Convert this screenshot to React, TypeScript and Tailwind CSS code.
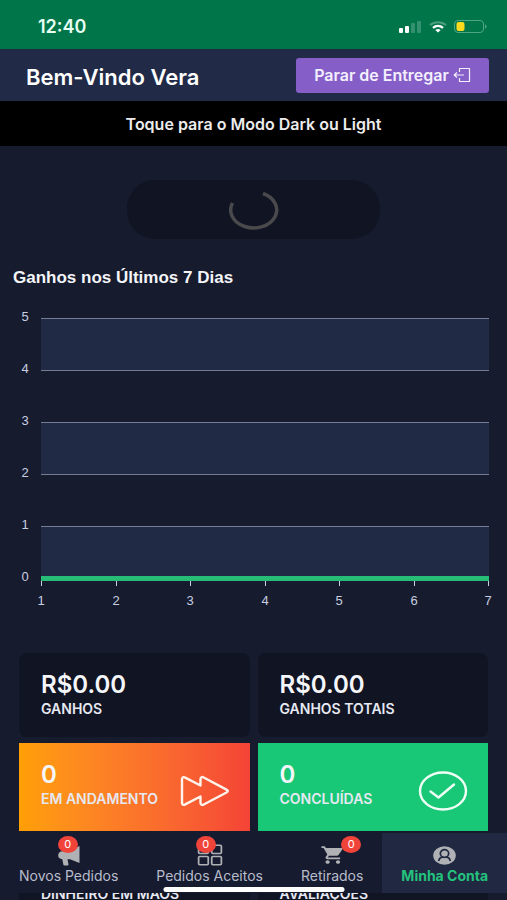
import type { ReactNode } from "react";
import { IoGridOutline } from "react-icons/io5";
import { IoMdCart } from "react-icons/io";

function StatusBar() {
  return (
    <div className="flex h-[49px] items-center justify-between bg-[#007549] pr-5 pl-[38px] pt-1">
      <span className="text-[18px] font-semibold text-[#e6fff3]">12:40</span>
      <div className="flex items-center gap-[7px]">
        <svg className="h-3 w-[23px]" viewBox="0 0 23 12" aria-hidden="true">
          <rect x="0" y="7" width="4" height="5" rx="1" fill="#fff" />
          <rect x="6" y="5" width="4" height="7" rx="1" fill="#fff" />
          <rect x="12" y="2" width="4" height="10" rx="1" fill="#339170" />
          <rect x="18" y="0" width="4" height="12" rx="1" fill="#339170" />
        </svg>
        <svg className="h-3 w-[18px]" viewBox="0 0 18 12" fill="none" aria-hidden="true">
          <path d="M1 4C5.400 0.200 12.600 0.200 17 4" stroke="#4c9f7d" strokeWidth="2" />
          <path d="M4 6.800C7 4.300 11 4.300 14 6.800" stroke="#fff" strokeWidth="2.400" />
          <path d="M6.300 9C8 7.700 10 7.700 11.700 9L9 11.600Z" fill="#fff" />
        </svg>
        <svg className="h-[13px] w-[33px]" viewBox="0 0 33 13" fill="none" aria-hidden="true">
          <rect x="0.500" y="0.500" width="29" height="12" rx="3.500" stroke="#4fa683" />
          <rect x="2.500" y="2" width="8" height="9" rx="2" fill="#fbdb1d" />
          <path d="M31 4.500C33 5 33 8 31 8.500Z" fill="#4fa683" />
        </svg>
      </div>
    </div>
  );
}

function ExitIcon() {
  return (
    <svg className="h-4 w-[18px]" viewBox="0 0 18 16" fill="none" stroke="currentColor" strokeWidth="1.200" strokeLinejoin="round" aria-hidden="true">
      <path d="M6.500 5V1.500H16.500V14.500H6.500V11" />
      <path d="M11 8H1.500M4 5.500L1.200 8L4 10.500" />
    </svg>
  );
}

function ForwardIcon() {
  return (
    <svg className="h-8 w-[50px]" viewBox="0 0 50 32" fill="none" stroke="currentColor" strokeWidth="2.400" strokeLinejoin="round" aria-hidden="true">
      <path d="M2 4.200C2 2.300 3.500 1.500 5.200 2.600L20.500 10.500V4.200C20.500 2.300 22 1.500 23.700 2.500L46.500 14.600C48.300 15.600 48.300 16.600 46.500 17.500L23.700 29.500C22 30.500 20.500 29.700 20.500 27.800V21.500L5.200 29.400C3.500 30.500 2 29.700 2 27.800Z" />
    </svg>
  );
}

function CheckIcon() {
  return (
    <svg className="h-10 w-[50px]" viewBox="0 0 50 40" fill="none" stroke="currentColor" strokeLinecap="round" strokeLinejoin="round" aria-hidden="true">
      <ellipse cx="25" cy="20" rx="23" ry="18.500" strokeWidth="2.400" />
      <path d="M12.500 20.500L20.500 26.500L36 13.500" strokeWidth="2.400" />
    </svg>
  );
}

function MegaphoneIcon() {
  return (
    <svg className="h-[21px] w-[22px]" viewBox="0 0 22 21" fill="currentColor" aria-hidden="true">
      <path d="M21.500 1V18L12 14.300H9.500L10.500 19.500Q10.500 20.500 9.500 20.500H6.500Q5.500 20.500 5.300 19.500L4.300 14.200C1.500 14 0.200 12.500 0.200 10.500C0.200 8 1.700 6.300 4.500 6.300H11Z" />
    </svg>
  );
}

function PersonIcon() {
  return (
    <svg className="h-[19px] w-[23px]" viewBox="0 0 23 19" aria-hidden="true">
      <ellipse cx="11.500" cy="9.500" rx="11.300" ry="9.300" fill="currentColor" />
      <path d="M5.800 15C6 11.500 8.500 10.800 11.500 10.800C14.500 10.800 17 11.500 17.200 15" fill="none" stroke="#202842" strokeWidth="1.700" />
      <ellipse cx="11.500" cy="7.500" rx="4.200" ry="3.800" fill="currentColor" stroke="#202842" strokeWidth="1.700" />
    </svg>
  );
}

const LEVELS = [5, 4, 3, 2, 1, 0];
const DAYS = [1, 2, 3, 4, 5, 6, 7];

function EarningsChart() {
  return (
    <svg className="block w-full" viewBox="0 0 507 310" role="img" aria-label="Ganhos nos Últimos 7 Dias">
      {LEVELS.filter((n) => n % 2 === 1).map((n) => (
        <rect key={n} x="41" y={18 + (5 - n) * 52} width="448" height="52" fill="#212a45" />
      ))}
      {LEVELS.map((n) => (
        <g key={n}>
          {n > 0 && <rect x="41" y={17 + (5 - n) * 52} width="448" height="1" fill="#747d95" />}
          <text x="25" y={20 + (5 - n) * 52} textAnchor="middle" className="fill-[#c9cfe0] font-['Liberation_Sans',Arial,sans-serif] text-[13px]">
            {n}
          </text>
        </g>
      ))}
      {DAYS.map((d, i) => (
        <g key={d}>
          <rect x={41 + Math.round(i * 74.5)} y="280" width="1" height="5" fill="#c9cfe0" />
          <text x={41 + Math.round(i * 74.5)} y="304" textAnchor="middle" className="fill-[#c9cfe0] font-['Liberation_Sans',Arial,sans-serif] text-[13px]">
            {d}
          </text>
        </g>
      ))}
      <rect x="41" y="275" width="448" height="5" fill="#28bd76" />
    </svg>
  );
}

function StatCard({ value, label, tone, icon }: { value?: string; label: string; tone: string; icon?: ReactNode }) {
  return (
    <div className={`flex justify-between pl-[22px] ${tone}`}>
      <div>
        {value && <p className="text-[24px] leading-6 font-semibold text-[#f5f6fa]">{value}</p>}
        <p className="text-[14px] leading-6 font-semibold whitespace-nowrap text-[#e6e8f2]">{label}</p>
      </div>
      {icon}
    </div>
  );
}

interface NavItemProps {
  label: string;
  icon: ReactNode;
  badge?: string;
  active?: boolean;
}

function NavItem({ label, icon, badge, active }: NavItemProps) {
  return (
    <a
      href="#"
      aria-current={active ? "page" : undefined}
      className={`flex flex-auto flex-col items-center pt-[11px] text-[14px] leading-5 whitespace-nowrap ${
        active ? "bg-[#202842] font-bold text-[#24c27c]" : "text-[#b9bdcb]"
      }`}
    >
      <span className="relative flex h-[22px] items-center text-[#b0b1b5]">
        {icon}
        {badge && (
          <span className={`absolute -top-2 flex h-[17px] w-5 items-center justify-center rounded-[50%] bg-[#f0443a] text-[11px] leading-none text-white ${badge}`}>
            0
          </span>
        )}
      </span>
      {label}
    </a>
  );
}

export default function App() {
  return (
    <div className="relative h-screen overflow-hidden bg-[#161b2e] font-[Inter,sans-serif]">
      <StatusBar />
      <header className="flex h-[52px] items-center justify-between bg-[#212a47] pr-[18px] pl-[26px]">
        <h1 className="pt-1 text-[22px] font-semibold text-white">Bem-Vindo Vera</h1>
        <button type="button" className="flex h-[35px] w-[193px] items-center justify-center gap-1 rounded-[3px] bg-[#855fc7] text-[16px] font-semibold whitespace-nowrap text-[#f4efff]">
          Parar de Entregar
          <ExitIcon />
        </button>
      </header>
      <button type="button" className="block h-[45px] w-full bg-black text-center text-[16px] font-semibold text-[#ececec]">
        Toque para o Modo Dark ou Light
      </button>

      <main>
        <div className="mx-auto mt-[34px] flex h-[59px] w-1/2 items-center justify-center rounded-[28px] bg-[#111423]">
          <svg className="h-10 w-[50px]" viewBox="0 0 50 40" fill="none" role="status" aria-label="Carregando">
            <path d="M34 3.500A23 18 0 1 1 3.500 13" stroke="#4a4a4c" strokeWidth="3.500" />
          </svg>
        </div>
        <h2 className="mt-[27px] mb-[11px] pl-[13px] font-['Liberation_Sans',Arial,sans-serif] text-[17px] leading-6 font-bold text-[#f4f5f8]">
          Ganhos nos Últimos 7 Dias
        </h2>
        <EarningsChart />

        <section className="mt-[42px] grid grid-cols-2 gap-x-2 gap-y-1.5 px-[19px]">
          <StatCard value="R$0.00" label="GANHOS" tone="h-[84px] rounded-lg bg-[#111423] pt-5" />
          <StatCard value="R$0.00" label="GANHOS TOTAIS" tone="h-[84px] rounded-lg bg-[#111423] pt-5" />
          <StatCard
            value="0"
            label="EM ANDAMENTO"
            tone="h-[88px] bg-linear-to-r from-[#ff9f04] to-[#f44336] pt-5 pr-5"
            icon={<span className="pt-3 text-[#fff4ec]"><ForwardIcon /></span>}
          />
          <StatCard
            value="0"
            label="CONCLUÍDAS"
            tone="h-[88px] bg-[#19c876] pt-5 pr-5"
            icon={<span className="pt-2 text-[#effff6]"><CheckIcon /></span>}
          />
          <StatCard label="DINHEIRO EM MÃOS" tone="h-[84px] rounded-lg bg-[#111423] pt-[45px]" />
          <StatCard label="AVALIAÇÕES" tone="h-[84px] rounded-lg bg-[#111423] pt-[45px]" />
        </section>
      </main>

      <nav className="absolute inset-x-0 bottom-[7px] flex h-[60px] bg-[#161b2f]">
        <NavItem label="Novos Pedidos" badge="left-0" icon={<MegaphoneIcon />} />
        <NavItem label="Pedidos Aceitos" badge="left-0" icon={<IoGridOutline className="h-6 w-7" preserveAspectRatio="none" />} />
        <NavItem label="Retirados" badge="-right-4" icon={<IoMdCart className="h-[22px] w-[26px]" preserveAspectRatio="none" />} />
        <NavItem label="Minha Conta" active icon={<PersonIcon />} />
      </nav>
      <div className="absolute bottom-2 left-1/2 h-[5px] w-[181px] -translate-x-1/2 rounded-full bg-white" />
    </div>
  );
}
